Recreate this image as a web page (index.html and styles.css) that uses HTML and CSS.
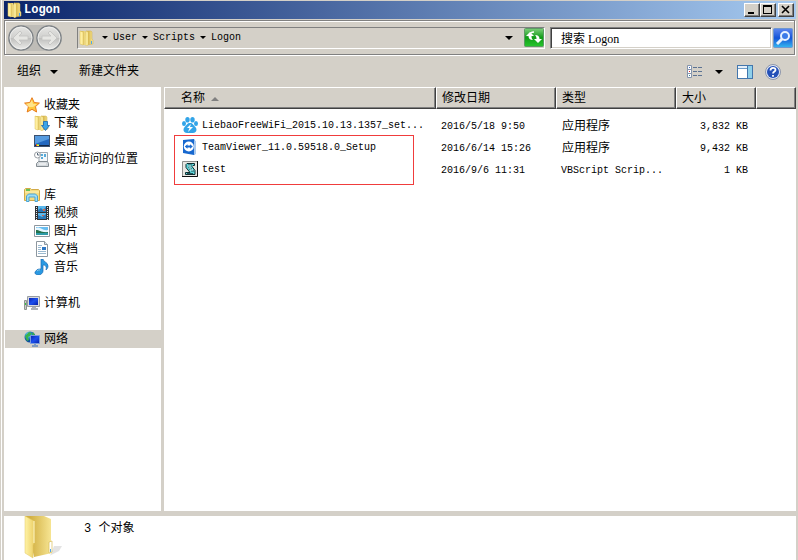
FILE: index.html
```html
<!DOCTYPE html>
<html lang="zh-CN">
<head>
    <meta charset="UTF-8">
    <meta name="viewport" content="width=device-width, initial-scale=1.0">
    <title>Logon</title>
    <link rel="stylesheet" href="styles.css">
</head>
<body>
    <svg class="defs" aria-hidden="true">
        <defs>
            <linearGradient id="gold" x1="0" x2="1"><stop offset="0" stop-color="#fff3a6"/><stop offset="1" stop-color="#ecd068"/></linearGradient>
            <linearGradient id="goldBack" x1="0" x2="1"><stop offset="0.2" stop-color="#d2b043"/><stop offset="1" stop-color="#f8e796"/></linearGradient>
            <linearGradient id="disc" x2="0" y2="1"><stop offset="0" stop-color="#e6e6e4"/><stop offset=".48" stop-color="#d0d0ce"/><stop offset=".52" stop-color="#c0c0be"/><stop offset="1" stop-color="#eeeeec"/></linearGradient>
            <linearGradient id="green" x2="0" y2="1"><stop offset="0" stop-color="#7fcf7c"/><stop offset=".5" stop-color="#129c18"/><stop offset="1" stop-color="#27c62d"/></linearGradient>
            <linearGradient id="blue" x2="0" y2="1"><stop offset="0" stop-color="#5f88ef"/><stop offset=".5" stop-color="#1454d8"/><stop offset="1" stop-color="#35b8f0"/></linearGradient>
            <linearGradient id="screen" x2="1" y2="1"><stop offset="0" stop-color="#0a22b0"/><stop offset=".5" stop-color="#1c50ee"/><stop offset="1" stop-color="#0720a8"/></linearGradient>
            <radialGradient id="globe" cx=".35" cy=".3"><stop offset="0" stop-color="#c8f4ff"/><stop offset=".5" stop-color="#2c9bdc"/><stop offset="1" stop-color="#0c4ea0"/></radialGradient>
            <symbol id="folder" viewBox="0 0 16 16">
                <path d="M1 1h5l1 2v12H4z" fill="url(#goldBack)"/>
                <path d="M7 1h5l1 1v7l1 1v4l-6 1z" fill="url(#goldBack)" stroke="#d3b34c" stroke-width=".5"/>
                <path d="M1 1l3 1v13l-3-1z" fill="#ffefa0" stroke="#d8bd58" stroke-width=".5"/>
                <path d="M7 1l2 1v13l-2 1z" fill="#fff3a8" stroke="#d8bd58" stroke-width=".5"/>
                <path d="M12 11h1v3h-1z" fill="#4aa8f0"/>
            </symbol>
        </defs>
    </svg>

    <div class="window">
        <header class="title-bar">
            <svg class="icon" viewBox="0 0 16 16"><use href="#folder"/></svg>
            <h1>Logon</h1>
            <div class="window-buttons">
                <button type="button" aria-label="最小化"><svg viewBox="0 0 12 10"><path d="M2 7h6v2H2z"/></svg></button>
                <button type="button" aria-label="最大化"><svg viewBox="0 0 12 10"><path d="M1 0h9v9H1zM2 2v6h7V2z" fill-rule="evenodd"/></svg></button>
                <button type="button" class="close" aria-label="关闭"><svg viewBox="0 0 12 10"><path d="M2 1l7 7M9 1L2 8" fill="none" stroke="#000" stroke-width="1.600"/></svg></button>
            </div>
        </header>

        <nav class="nav-bar">
            <div class="history">
                <button type="button" aria-label="后退">
                    <svg viewBox="0 0 26 26"><circle cx="13" cy="13" r="12" fill="url(#disc)" stroke="#7d8286" stroke-width="1.500"/><circle cx="13" cy="13" r="11" fill="none" stroke="#f4f4f2" stroke-width=".8"/><path d="M5 13l7-7 2 2-3 3h9v4h-9l3 3-2 2z" fill="#e6e6e3" stroke="#c2c2c0" stroke-width=".8"/></svg>
                </button>
                <button type="button" aria-label="前进">
                    <svg viewBox="0 0 26 26"><circle cx="13" cy="13" r="12" fill="url(#disc)" stroke="#7d8286" stroke-width="1.500"/><circle cx="13" cy="13" r="11" fill="none" stroke="#f4f4f2" stroke-width=".8"/><path d="M21 13l-7-7-2 2 3 3H6v4h9l-3 3 2 2z" fill="#e6e6e3" stroke="#c2c2c0" stroke-width=".8"/></svg>
                </button>
            </div>
            <div class="address">
                <svg class="icon" viewBox="0 0 16 16"><use href="#folder"/></svg>
                <ol class="crumbs">
                    <li><a href="#">User</a></li>
                    <li><a href="#">Scripts</a></li>
                    <li><a href="#">Logon</a></li>
                </ol>
                <button type="button" class="drop" aria-label="以前的位置"><span class="arrow big"></span></button>
                <button type="button" class="refresh" aria-label="刷新">
                    <svg viewBox="0 0 20 19"><rect x=".5" y=".5" width="19" height="18" rx="1" fill="url(#green)" stroke="#5c9a64"/><path d="M2 8l4-4 4 4H7.500c0 2 .5 3 1.500 4-3 0-4.500-1.500-4.500-4zM18 11l-4 4-4-4h2.500c0-2-.5-3-1.500-4 3 0 4.500 1.500 4.500 4z" fill="#fff"/><path d="M6 7c0-2 1-3 4-3" fill="none" stroke="#fff" stroke-width="1.500"/></svg>
                </button>
            </div>
            <form class="search">
                <input type="text" aria-label="搜索 Logon" value="搜索 Logon">
                <button type="button" aria-label="搜索">
                    <svg viewBox="0 0 20 20"><rect x=".5" y=".5" width="19" height="19" rx="1" fill="url(#blue)" stroke="#6f97cf"/><circle cx="12" cy="8" r="4" fill="#3c7be8" stroke="#e8f2ff" stroke-width="2"/><path d="M9 11l-5 5" stroke="#e8f2ff" stroke-width="3"/></svg>
                </button>
            </form>
        </nav>

        <div class="command-bar">
            <button type="button">组织<span class="arrow big"></span></button>
            <button type="button">新建文件夹</button>
            <div class="view-tools">
                <button type="button" aria-label="视图">
                    <svg class="icon" viewBox="0 0 16 16"><g fill="#fff" stroke="#8494ac"><path d="M.5 1.500h4v4h-4zM.5 5.500h4v4h-4zM.5 9.500h4v4h-4z"/></g><path d="M6 3h4v1H6zM11 3h4v1h-4zM6 7h4v1H6zM11 7h4v1h-4zM6 11h4v1H6zM11 11h4v1h-4z" fill="#5c7393"/><path d="M2 3h1v1H2z" fill="#3b67c4"/><path d="M2 7h1v1H2z" fill="#e02020"/><path d="M2 11h1v1H2z" fill="#3b8a9c"/></svg>
                </button>
                <button type="button" class="views-drop" aria-label="更多视图"><span class="arrow big"></span></button>
                <button type="button" class="preview" aria-label="预览窗格">
                    <svg class="icon" viewBox="0 0 16 16"><rect x=".5" y="1.500" width="15" height="13" fill="#fff" stroke="#4376ad"/><path d="M1 2h14v2H1z" fill="#e6eff9"/><path d="M1 4h9v1H1z" fill="#6d9cc9"/><path d="M11 2h4v12h-4z" fill="#8fd0ea"/><path d="M10 2h1v12h-1z" fill="#4376ad"/></svg>
                </button>
                <button type="button" aria-label="帮助">
                    <svg class="icon" viewBox="0 0 16 16"><circle cx="8" cy="8" r="7.500" fill="#dfe5f3" stroke="#8d96aa"/><circle cx="8" cy="8" r="6" fill="#2450b8"/><path d="M5.500 6.500c0-3.500 5-3.500 5-.5 0 1.500-2.500 1.500-2.500 3.500M8 11v1.800" fill="none" stroke="#fff" stroke-width="1.800"/></svg>
                </button>
            </div>
        </div>

        <main class="content">
            <aside class="sidebar">
                <ul>
                    <li><a href="#">
                        <svg class="icon" viewBox="0 0 16 16"><path d="M8 .7l2.200 4.800 5.200.6-3.900 3.500 1.100 5.400L8 12.300 3.200 15l1.200-5.400L.6 6.100l5.200-.6z" fill="#ffc83c" stroke="#e87b1c"/><path d="M8 3l1 4 4 0-4 3-4 0-3-3 4-1z" fill="#ffe48a"/></svg>
                        <span>收藏夹</span></a>
                        <ul>
                            <li><a href="#">
                                <svg class="icon" viewBox="0 0 16 16"><use href="#folder"/><path d="M9.500 6.500h4v4h2l-4 5-4-5h2z" fill="#3ba4e8" stroke="#1668b4" stroke-width=".8"/></svg>
                                <span>下载</span></a></li>
                            <li><a href="#">
                                <svg class="icon" viewBox="0 0 16 16"><rect x=".5" y="2.500" width="15" height="11" fill="#2368c0" stroke="#3d5270"/><path d="M1 3h14v3L1 11z" fill="#569be0"/><path d="M1 12h14v1H1z" fill="#142848"/><path d="M2 11h1v2H2z" fill="#f04f28"/><path d="M3 11h2v1H3z" fill="#6dd550"/><path d="M3 12h2v1H3z" fill="#ffe340"/></svg>
                                <span>桌面</span></a></li>
                            <li><a href="#">
                                <svg class="icon" viewBox="0 0 16 16"><path d="M5 1.500h8.500V11H5z" fill="#f4f8fb" stroke="#9fa9b1"/><path d="M7 3h2v2H7zM10 3h2v3h-2zM7 6h2v2H7z" fill="#58aad8"/><path d="M4.500 10.500h9l1 2v3h-12v-3z" fill="#d3d8dc" stroke="#838b91"/><path d="M5 13h7" stroke="#fff"/><circle cx="3.500" cy="4" r="3" fill="#fff" stroke="#9a9fa5"/><path d="M3.500 2v2h2" fill="none" stroke="#567"/></svg>
                                <span>最近访问的位置</span></a></li>
                        </ul>
                    </li>
                    <li><a href="#">
                        <svg class="icon" viewBox="0 0 16 16"><path d="M.5 2.500l1-1h5l1 1h7l1 1v10h-15z" fill="#f5dc82" stroke="#d2aa48"/><path d="M2 3h4" stroke="#38b848" stroke-width="1.500"/><path d="M1 5h14" stroke="#fff3b8"/><path d="M2.500 14.500V9l2-2h7l2 2v5.500h-2.500V10H5v4.500z" fill="#9bdcf8" stroke="#4da5d2"/></svg>
                        <span>库</span></a>
                        <ul>
                            <li><a href="#">
                                <svg class="icon" viewBox="0 0 16 16"><path d="M1 1h14v14H1z" fill="#303338"/><path d="M4 1h8v6H4zM4 8h8v6H4z" fill="#5cb8ec"/><path d="M4 5l3-2 2 2 3-3v5H4zM4 10l4 2 4-3v5H4z" fill="#2a78b8"/><path d="M9 4h2v2H9zM8 10h2v1H8z" fill="#d76548"/><path d="M2.500 2v13M13.500 2v13" stroke="#e8eaec" stroke-dasharray="1 1"/></svg>
                                <span>视频</span></a></li>
                            <li><a href="#">
                                <svg class="icon" viewBox="0 0 16 16"><path d="M.5 2.500h15v11H.5z" fill="#fff" stroke="#8d979f"/><path d="M2 4h12v8H2z" fill="#68bdf0"/><path d="M2 5c4-2 6 3 12 2v2H2z" fill="#e6f7ff"/><path d="M2 7c4 0 5 3 12 2v2H2z" fill="#24734e"/><path d="M2 10h12v2H2z" fill="#2e9ba8"/></svg>
                                <span>图片</span></a></li>
                            <li><a href="#">
                                <svg class="icon" viewBox="0 0 16 16"><path d="M2.500.5h8l3 3v12h-11z" fill="#fff" stroke="#8d979f"/><path d="M10.500.5v3h3" fill="#dce5eb" stroke="#8d979f"/><path d="M4 4.500h4M4 6.500h3M4 8.500h3M4 10.500h8M4 12.500h8" stroke="#9bb9cf"/><path d="M8 6h4v3H8z" fill="#2f78c5"/></svg>
                                <span>文档</span></a></li>
                            <li><a href="#">
                                <svg class="icon" viewBox="0 0 16 16"><path d="M7 0h2c0 3 5 3 5 7 0 2-1 3-2 4 1-4-1-5-3-5v6c0 2-2 4-5 4s-4-3-2-4c1-2 3-2 5-2z" fill="#2999e2" stroke="#1767b2" stroke-width=".7"/><path d="M3 12c1-1 2-1 3-1" stroke="#9fe0ff"/></svg>
                                <span>音乐</span></a></li>
                        </ul>
                    </li>
                    <li><a href="#">
                        <svg class="icon" viewBox="0 0 16 16"><path d="M.5 5.500h2v9h-2z" fill="#c9cdc9" stroke="#8e9490"/><path d="M1 8h1v2H1z" fill="#37c046"/><path d="M3.500 1.500h12v10h-12z" fill="#d8dadd" stroke="#989da3"/><path d="M5 3h9v7H5z" fill="url(#screen)"/><path d="M8 12h4v1h2v2H7v-2h1z" fill="#aeb3b8"/></svg>
                        <span>计算机</span></a></li>
                    <li class="selected"><a href="#" aria-current="page">
                        <svg class="icon" viewBox="0 0 16 16"><circle cx="6" cy="6" r="5.500" fill="url(#globe)"/><path d="M1 5l4-4 3 1-2 3-2 1 1 3-2 1zM9 1l2 3H8z" fill="#38b24d"/><path d="M6.500 4.500h9v8h-9z" fill="url(#screen)" stroke="#7a9cdc"/><path d="M10 13h2v1h2v2H8v-2h2z" fill="#7f9bc0"/></svg>
                        <span>网络</span></a></li>
                </ul>
            </aside>

            <section class="files">
                <table>
                    <colgroup>
                        <col class="col-name">
                        <col class="col-date">
                        <col class="col-type">
                        <col class="col-size">
                        <col>
                    </colgroup>
                    <thead>
                        <tr>
                            <th class="name"><button type="button">名称<span class="sort"></span></button></th>
                            <th><button type="button">修改日期</button></th>
                            <th><button type="button">类型</button></th>
                            <th><button type="button">大小</button></th>
                            <th></th>
                        </tr>
                    </thead>
                    <tbody>
                        <tr>
                            <td class="name"><div class="file">
                                <svg class="icon" viewBox="0 0 16 16"><g fill="#32a4e8"><ellipse cx="5.500" cy="2.800" rx="2.200" ry="2.800"/><ellipse cx="10.500" cy="2.800" rx="2.200" ry="2.800"/><ellipse cx="2" cy="6.500" rx="2" ry="2.500"/><ellipse cx="14" cy="6.500" rx="2" ry="2.500"/><path d="M8 6c3 0 3 2 5 3.500 3 3 1 6.500-2 6.500H5c-3 0-5-3.500-2-6.500C5 8 5 6 8 6z"/></g><path d="M9 7l-4 4h2.500l-1.500 4 5-5H8z" fill="#fff"/></svg>
                                <span>LiebaoFreeWiFi_2015.10.13.1357_set...</span>
                            </div></td>
                            <td>2016/5/18 9:50</td>
                            <td class="cn">应用程序</td>
                            <td class="size">3,832 KB</td>
                            <td></td>
                        </tr>
                        <tr>
                            <td class="name"><div class="file">
                                <svg class="icon" viewBox="0 0 16 16"><path d="M1 1l11-1 1 2v13l-1 1-11-2z" fill="#1768cf"/><path d="M12 1l2 1v13l-2 1z" fill="#a9c9ee"/><circle cx="6.800" cy="7.500" r="5" fill="#fff"/><path d="M2.800 7.500l2.700-2.200v1.200h2.600V5.300l2.700 2.200-2.700 2.200V8.500H5.500v1.200z" fill="#1768cf"/></svg>
                                <span>TeamViewer_11.0.59518.0_Setup</span>
                            </div></td>
                            <td>2016/6/14 15:26</td>
                            <td class="cn">应用程序</td>
                            <td class="size">9,432 KB</td>
                            <td></td>
                        </tr>
                        <tr>
                            <td class="name"><div class="file">
                                <svg class="icon" viewBox="0 0 16 16"><path d="M.5.5h15v15H.5z" fill="#e7e7e2" stroke="#8e8e8c"/><path d="M15.500 0v15.500H0" fill="none" stroke="#111"/><path d="M5 2.500h7.500v2H11l-1 1 3 4v4H3.500v-2H8l-4-5v-3z" fill="#5fd6da" stroke="#102e32"/><path d="M6 4h4M6 6h3M7 8h3M9 10h3M5 12.500h6" stroke="#102e32" stroke-width=".8"/><path d="M6 5h3M7 7h2M8 9h3" stroke="#efffff" stroke-width=".8"/></svg>
                                <span>test</span>
                            </div></td>
                            <td>2016/9/6 11:31</td>
                            <td>VBScript Scrip...</td>
                            <td class="size">1 KB</td>
                            <td></td>
                        </tr>
                    </tbody>
                </table>
                <div class="highlight"></div>
            </section>
        </main>

        <footer class="status">
            <svg viewBox="0 0 42 46">
                <path d="M26 40l4-10 8 0-3 5-8 4z" fill="#c8c8c8" opacity=".5"/>
                <path d="M1 0h19l7 3v22l1 1v11l-18 4z" fill="url(#goldBack)"/>
                <path d="M1 0l9 5v22l-1 2v13L1 37z" fill="url(#gold)" stroke="#e0c660" stroke-width=".5"/>
                <path d="M10 5v22" stroke="#fff8c8"/>
                <path d="M25 26l3-1v11l-3 1z" fill="#fff" stroke="#d8bd59" stroke-width=".7"/>
                <path d="M26 33h1v3h-1z" fill="#4aa4ef"/>
            </svg>
            <p>3 个对象</p>
        </footer>
    </div>
</body>
</html>
```
FILE: styles.css
```css
* {
    box-sizing: border-box;
}

body {
    margin: 0;
    background: #d4d0c8;
    color: #000;
    font: 12px/18px "Liberation Mono", "Noto Sans CJK SC", monospace;
}

button {
    margin: 0;
    padding: 0;
    border: 0;
    background: none;
    color: inherit;
    font: inherit;
}

a {
    color: inherit;
    text-decoration: none;
}

ul,
ol {
    margin: 0;
    padding: 0;
    list-style: none;
}

svg {
    display: block;
    flex: none;
}

.defs {
    position: absolute;
    width: 0;
    height: 0;
}

.icon {
    width: 16px;
    height: 16px;
}

/* window frame */
.window {
    display: flex;
    flex-direction: column;
    height: 100vh;
    padding: 1px 2px 0 2px;
    margin-left: 1px;
    border-left: 1px solid #fff;
}

.title-bar {
    display: flex;
    align-items: center;
    height: 18px;
    padding: 0 2px 0 3px;
    background: linear-gradient(to right, #0a246a, #a6caf0);
    color: #fff;
}

.title-bar h1 {
    flex: 1;
    margin: 0 0 0 1px;
    font-size: 12px;
}

.window-buttons {
    display: flex;
}

.window-buttons button {
    width: 16px;
    height: 14px;
    padding: 1px;
    border: 1px solid;
    border-color: #fff #404040 #404040 #fff;
    background: #d4d0c8;
    box-shadow: inset -1px -1px 0 #808080;
}

.window-buttons .close {
    margin-left: 2px;
}

.window-buttons svg {
    width: 12px;
    height: 10px;
}

/* address row */
.nav-bar {
    display: flex;
    align-items: center;
    height: 35px;
    margin: 1px 1px 1px 0;
    padding: 0 1px 0 3px;
    border: 1px solid #808080;
    box-shadow: 1px 1px 0 #fff, inset 1px 1px 0 #fff;
}

.history {
    display: flex;
    gap: 2px;
    margin-right: 15px;
    border-radius: 13px;
    background: #bebcb7;
}

.history svg {
    width: 26px;
    height: 26px;
}

.address {
    display: flex;
    flex: 1;
    align-items: center;
    height: 22px;
    margin-right: 5px;
    padding-left: 1px;
    border: 1px solid;
    border-color: #808080 #fff #fff #808080;
}

.crumbs {
    display: flex;
    flex: 1;
    font-size: 10px;
}

.crumbs li {
    display: flex;
    align-items: center;
}

.crumbs li::before {
    content: "";
    margin: 0 5px;
    border: 3px solid transparent;
    border-top-color: #000;
    border-bottom: 0;
}

.crumbs li:first-child::before {
    margin-left: 7px;
}

.arrow {
    display: inline-block;
    border: 3px solid transparent;
    border-top-color: #000;
    border-bottom: 0;
}

.arrow.big {
    border-width: 4px 4px 0;
}

.drop {
    display: flex;
    align-items: center;
    margin-right: 11px;
}

.refresh svg {
    width: 20px;
    height: 19px;
}

.search {
    display: flex;
    flex: 0 1 243px;
    gap: 1px;
}

.search input {
    flex: 1;
    min-width: 0;
    height: 22px;
    padding: 0 10px;
    border: 1px solid;
    border-color: #808080 #fff #fff #808080;
    border-radius: 0;
    outline: 0;
    background: #fff;
    box-shadow: inset 1px 1px 0 #404040, inset -1px -1px 0 #d4d0c8;
    color: #000;
    font: 12px "Liberation Serif", "Noto Sans CJK SC", serif;
}

.search svg {
    width: 20px;
    height: 20px;
}

/* command bar */
.command-bar {
    display: flex;
    align-items: center;
    gap: 21px;
    height: 31px;
    padding: 0 15px 0 13px;
}

.command-bar > button {
    display: flex;
    align-items: center;
    gap: 9px;
}

.view-tools {
    display: flex;
    align-items: center;
    gap: 12px;
    margin-left: auto;
}

.view-tools button {
    display: flex;
}

.view-tools .preview {
    margin-left: 2px;
}

/* panes */
.content {
    display: flex;
    flex: 1;
    gap: 3px;
    min-height: 0;
}

.sidebar {
    flex: none;
    width: 157px;
    padding: 9px 0 0 1px;
    background: #fff;
}

.sidebar a {
    display: flex;
    align-items: center;
    gap: 4px;
    height: 18px;
    padding-left: 19px;
}

.sidebar ul ul a {
    padding-left: 29px;
}

.sidebar span {
    padding-top: 2px;
}

.sidebar > ul > li + li {
    margin-top: 18px;
}

.sidebar .selected {
    background: #d4d0c8;
}

.files {
    position: relative;
    flex: 1;
    min-width: 0;
    background: #fff;
}

.files table {
    width: 100%;
    border-collapse: separate;
    border-spacing: 0;
    table-layout: fixed;
}

.col-name {
    width: 272px;
}

.col-date,
.col-type {
    width: 120px;
}

.col-size {
    width: 80px;
}

.files th {
    height: 22px;
    padding: 2px 0 0 5px;
    border: 1px solid;
    border-color: #fff #404040 #404040 #fff;
    background: #d4d0c8;
    box-shadow: inset -1px -1px 0 #808080;
    font-weight: normal;
    text-align: left;
}

.files th button {
    display: flex;
    align-items: center;
    gap: 6px;
}

.files th.name {
    padding-left: 16px;
}

.sort {
    border: 4px solid transparent;
    border-top: 0;
    border-bottom-color: #808080;
}

.files tbody::before {
    content: "";
    display: block;
    height: 6px;
}

.files td {
    height: 22px;
    padding: 2px 4px 0 5px;
    font-size: 10px;
    white-space: nowrap;
}

.files td.name {
    padding: 0 4px 2px 18px;
}

.files td.cn {
    padding-left: 6px;
    font-size: 12px;
}

.files td.size {
    padding-right: 8px;
    text-align: right;
}

.file {
    display: flex;
    align-items: center;
    gap: 4px;
}

.file span {
    padding-top: 2px;
}

/* red frame over the two script files */
.highlight {
    position: absolute;
    top: 48px;
    left: 10px;
    width: 240px;
    height: 50px;
    border: 1px solid #f03c3c;
    pointer-events: none;
}

/* details pane */
.status {
    display: flex;
    gap: 18px;
    height: 44px;
    margin-top: 5px;
    padding-left: 20px;
    background: #fff;
    overflow: hidden;
}

.status svg {
    width: 42px;
    height: 46px;
}

.status p {
    margin: 4px 0 0;
}
```
